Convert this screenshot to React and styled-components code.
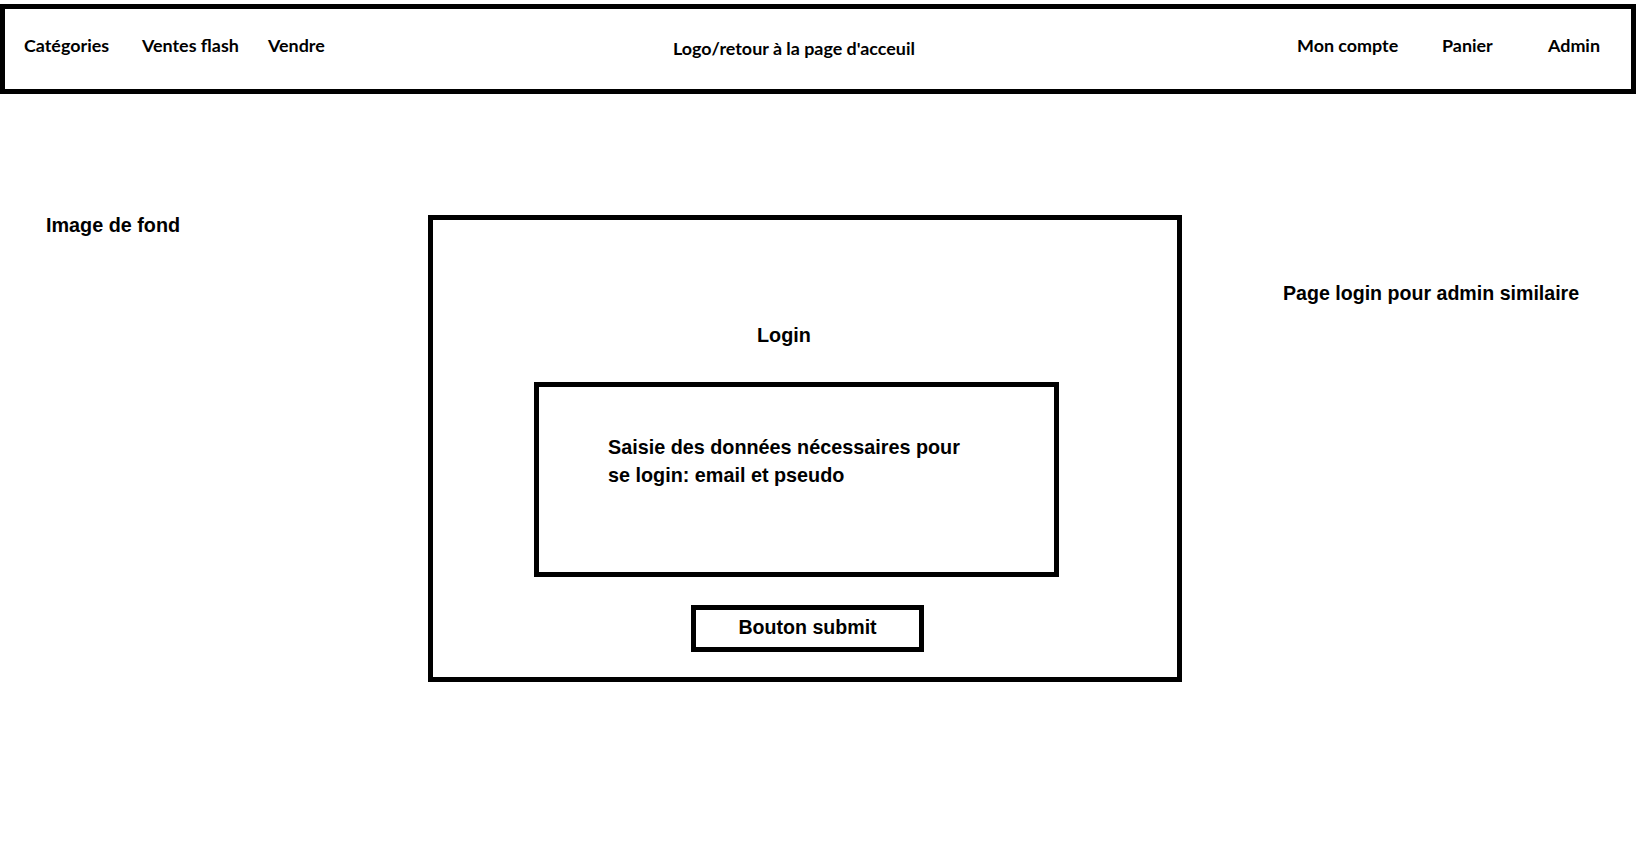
import React from 'react';
import styled, { createGlobalStyle } from 'styled-components';

const GlobalStyle = createGlobalStyle`
  html, body {
    margin: 0;
    padding: 0;
    background: #ffffff;
  }
  body {
    width: 1644px;
    min-height: 841px;
    color: #000000;
    font-family: "Liberation Sans", Arial, sans-serif;
    font-weight: 700;
    overflow: hidden;
  }
`;

const Header = styled.header`
  box-sizing: border-box;
  width: 1636px;
  height: 90px;
  margin-top: 4px;
  border: 5px solid #000;
  display: grid;
  grid-template-columns: 668px 624px 1fr;
  align-items: start;
  font-family: Lato, "Open Sans", sans-serif;
  font-weight: 700;
  font-size: 17.9px;
  line-height: 20px;
`;

const NavGroup = styled.nav`
  display: grid;
  grid-template-columns: ${(p) => p.$cols};
  padding-top: 26px;
  padding-left: ${(p) => p.$padLeft || '0px'};
`;

const NavLink = styled.a`
  color: #000;
  text-decoration: none;
  white-space: nowrap;
`;

const Logo = styled.a`
  color: #000;
  text-decoration: none;
  white-space: nowrap;
  padding-top: 29px;
`;

const Main = styled.main`
  display: flex;
  align-items: flex-start;
  font-size: 19.8px;
  line-height: 22px;
`;

const SideNote = styled.p`
  margin: ${(p) => p.$top} 0 0 0;
  padding-left: ${(p) => p.$left};
  width: ${(p) => p.$width || 'auto'};
  font-size: ${(p) => p.$size || '19.8px'};
  box-sizing: border-box;
  white-space: nowrap;
`;

const Frame = styled.section`
  box-sizing: border-box;
  width: 754px;
  height: 467px;
  margin-top: 121px;
  border: 5px solid #000;
  display: flex;
  flex-direction: column;
  align-items: flex-start;
  padding-top: 104px;
`;

const Title = styled.h1`
  margin: 0 0 36px 324px;
  font-size: 19.8px;
  line-height: 22px;
  font-weight: 700;
`;

const FieldsBox = styled.div`
  box-sizing: border-box;
  width: 525px;
  height: 195px;
  margin-left: 101px;
  border: 5px solid #000;
  padding: 46px 0 0 69px;
`;

const FieldsText = styled.p`
  margin: 0;
  width: 362px;
  line-height: 28px;
`;

const SubmitButton = styled.button`
  box-sizing: border-box;
  width: 233px;
  height: 47px;
  margin: 28px 0 0 258px;
  border: 5px solid #000;
  background: #fff;
  color: #000;
  font-family: "Liberation Sans", Arial, sans-serif;
  font-weight: 700;
  font-size: 19.6px;
  line-height: 22px;
  padding: 0 0 3px 0;
  cursor: pointer;
`;

export default function App() {
  return (
    <>
      <GlobalStyle />
      <Header>
        <NavGroup $cols="118px 126px auto" $padLeft="19px">
          <NavLink href="#">Catégories</NavLink>
          <NavLink href="#">Ventes flash</NavLink>
          <NavLink href="#">Vendre</NavLink>
        </NavGroup>
        <Logo href="#">Logo/retour à la page d'acceuil</Logo>
        <NavGroup $cols="145px 106px auto">
          <NavLink href="#">Mon compte</NavLink>
          <NavLink href="#">Panier</NavLink>
          <NavLink href="#">Admin</NavLink>
        </NavGroup>
      </Header>
      <Main>
        <SideNote $top="120px" $left="46px" $width="428px">Image de fond</SideNote>
        <Frame>
          <Title>Login</Title>
          <FieldsBox>
            <FieldsText>Saisie des données nécessaires pour se login: email et pseudo</FieldsText>
          </FieldsBox>
          <SubmitButton type="button">Bouton submit</SubmitButton>
        </Frame>
        <SideNote $top="188px" $left="101px" $size="19.6px">Page login pour admin similaire</SideNote>
      </Main>
    </>
  );
}
